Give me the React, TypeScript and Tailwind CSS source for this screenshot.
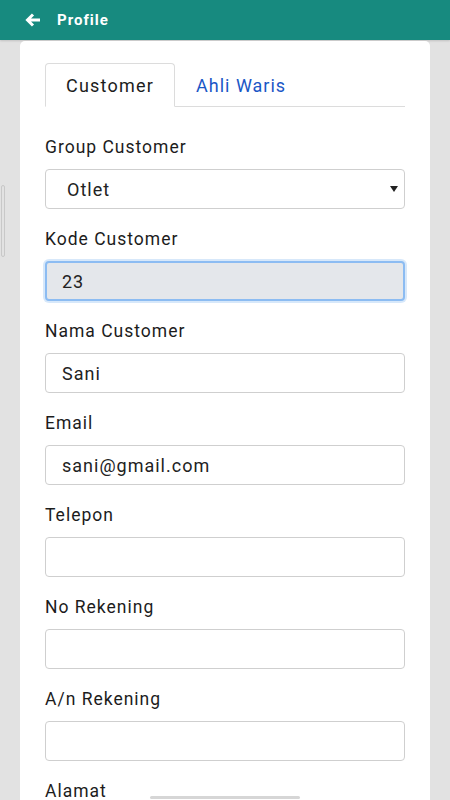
import React from "react";

const labelClass = "h-[24px] leading-[24px] text-[17.5px] tracking-[1px] text-[#1c1c1c] mb-[10px]";
const inputText = "text-[18px] tracking-[1px] text-[#222]";

function Field({ label, value, variant }: { label: string; value?: string; variant?: "focus" }) {
  return (
    <div className="mb-[18px]">
      <div className={labelClass}>{label}</div>
      {variant === "focus" ? (
        <div
          className={
            "h-[40px] w-full rounded-[4px] border-2 border-[#8cbcf2] bg-[#e4e7eb] px-[15px] flex items-center shadow-[0_0_0_2px_rgba(140,188,242,0.35)] " +
            inputText
          }
        >
          {value}
        </div>
      ) : (
        <div
          className={
            "h-[40px] w-full rounded-[4px] border border-[#cfcfcf] bg-white px-[16px] flex items-center " + inputText
          }
        >
          {value}
        </div>
      )}
    </div>
  );
}

export default function App() {
  return (
    <div
      className="relative w-[450px] h-[800px] overflow-hidden bg-[#e2e2e2]"
      style={{ fontFamily: "Roboto, 'Noto Sans', Arial, sans-serif" }}
    >
      <div className="h-[40px] bg-[#178a7f] flex items-center pl-[25px] shadow-[0_1px_2px_rgba(0,0,0,0.15)]">
        <svg width="16" height="14" viewBox="0 0 16 14" className="mr-[16px]">
          <path d="M15 7H3M8 1.5L2.5 7 8 12.5" stroke="white" strokeWidth="3" fill="none" strokeLinejoin="miter" />
        </svg>
        <span className="text-white font-bold text-[15px] tracking-[1px]">Profile</span>
      </div>

      <div className="mx-[20px] mt-[1px] bg-white rounded-t-[5px] px-[25px] pt-[22px] h-[800px]">
        <div className="flex border-b border-[#dcdcdc] h-[44px] mb-[28px]">
          <div className="w-[130px] h-[44px] border border-[#dcdcdc] border-b-white rounded-t-[4px] bg-white flex items-center justify-center text-[18px] tracking-[1.2px] text-[#1c1c1c] -mb-px">
            Customer
          </div>
          <div className="h-[44px] flex items-center pl-[21px] text-[18px] tracking-[1px] text-[#1a57c6]">
            Ahli Waris
          </div>
        </div>

        <div className="mb-[18px]">
          <div className={labelClass}>Group Customer</div>
          <div
            className={
              "h-[40px] w-full rounded-[4px] border border-[#cfcfcf] bg-white pl-[21px] pr-[6px] flex items-center justify-between " +
              inputText
            }
          >
            <span>Otlet</span>
            <svg width="8" height="6" viewBox="0 0 8 6">
              <path d="M0 0H8L4 6Z" fill="#222" />
            </svg>
          </div>
        </div>

        <Field label="Kode Customer" value="23" variant="focus" />
        <Field label="Nama Customer" value="Sani" />
        <Field label="Email" value="sani@gmail.com" />
        <Field label="Telepon" />
        <Field label="No Rekening" />
        <Field label="A/n Rekening" />
        <div className="h-[24px] leading-[24px] text-[17.5px] tracking-[1px] text-[#1c1c1c]">Alamat</div>
      </div>

      <div className="absolute left-[1px] top-[185px] w-[4px] h-[72px] rounded-[2px] border border-[#c8c8c8]" />
      <div className="absolute left-[150px] bottom-[1px] w-[150px] h-[3px] rounded-full bg-[#d6d6d6]" />
    </div>
  );
}
